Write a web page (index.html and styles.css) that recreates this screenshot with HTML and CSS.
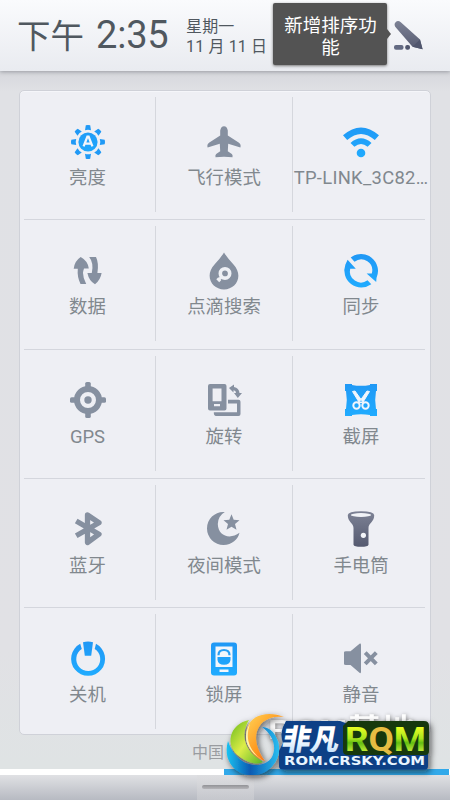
FILE: index.html
```html
<!DOCTYPE html>
<html lang="zh-CN">
<head>
<meta charset="utf-8">
<title>控制中心</title>
<link rel="stylesheet" href="styles.css">
</head>
<body>
<svg class="defs" width="0" height="0" aria-hidden="true">
  <defs>
    <linearGradient id="blue" x1="0" y1="-17" x2="0" y2="17" gradientUnits="userSpaceOnUse"><stop offset="0" stop-color="#2098f5"/><stop offset="1" stop-color="#20acff"/></linearGradient>
    <linearGradient id="slate" x1="0" y1="0" x2="0" y2="1"><stop offset="0" stop-color="#7d8295"/><stop offset="1" stop-color="#555a70"/></linearGradient>
  </defs>
</svg>
<div class="screen">
  <header class="topbar">
    <div class="time"><span class="ampm">下午</span><span class="clock">2:35</span></div>
    <div class="date"><span>星期一</span><span>11 月 11 日</span></div>
    <div class="tip">新增排序功能</div>
    <svg class="edit" viewBox="0 0 30 30">
      <path d="M1.2 5.8Q-.2 2.8 1.6 1.2 4-1 6.8 1.3L26 18.5 28.6 28.3 18.5 25.8Z" fill="url(#slate)"/>
      <path d="M18.5 25.8 26 18.5 28.6 28.3Z" fill="#50566d"/>
      <rect x="0" y="24" width="9.5" height="4.8" rx="2" fill="#636a82"/><rect x="11.2" y="24" width="4.8" height="4.8" rx="2" fill="#50566d"/>
    </svg>
  </header>

  <main class="panel">
    <div class="cell"><svg class="icon on" viewBox="-18 -18 36 36">
      <circle r="9.6"/>
      <path id="ray" d="M-3-11.8-2.2-16.7Q0-17.3 2.2-16.7L3-11.8Q0-12.8-3-11.8Z"/><use href="#ray" transform="rotate(45)"/><use href="#ray" transform="rotate(90)"/><use href="#ray" transform="rotate(135)"/><use href="#ray" transform="rotate(180)"/><use href="#ray" transform="rotate(225)"/><use href="#ray" transform="rotate(270)"/><use href="#ray" transform="rotate(315)"/>
      <path d="M-4.4 4.4-.6-5.3H.6L4.4 4.4M-2.6 1.6H2.6" fill="none" stroke="#f2f5fb" stroke-width="2.3"/></svg><span>亮度</span></div>
    <div class="cell"><svg class="icon" viewBox="-18 -18 36 36">
      <path d="M-3.8-11.5Q-3-15.8 0-15.8T3.8-11.5V-6.5L15 .8Q17.3 2.4 16.4 5.6L4.2 1.8 3.8 9.2 7.8 12Q9 13 8.5 15.3L0 14.8-8.5 15.3Q-9 13-7.8 12L-3.8 9.2-4.2 1.8-16.4 5.6Q-17.3 2.4-15 .8L-3.8-6.5Z"/></svg><span>飞行模式</span></div>
    <div class="cell"><svg class="icon on" viewBox="-18 -18 36 36">
      <path d="M-18-6.7Q0-22.5 18-6.7L13.8-2Q0-14-13.8-2Z"/><path d="M-10.5 1Q0-8.3 10.5 1L6.6 4.8Q0-.9-6.6 4.8Z"/><circle cy="11" r="4.3"/></svg><span class="wide">TP-LINK_3C82…</span></div>

    <div class="cell"><svg class="icon" viewBox="-18 -18 36 36">
      <path d="M-7.3-14Q-13.5-10-14.3-2.2H-10.2Q-11 6-7.5 13H-1.8Q-5 7-5 2Q-4.7-.5-4-2.4L.8-2.4Q0-10-7.3-14Z"/><path d="M1.2-14H8Q11-8 9.4 2H13.6Q12.5 9 7 13.2Q1 10-.6 2H3.8Q6-8 1.2-14Z"/></svg><span>数据</span></div>
    <div class="cell"><svg class="icon" viewBox="-18 -18 36 36">
      <path d="M0-18.5Q3-13.5 9.5-6.5C20 5 12 18.5 0 18.5S-20 5-9.5-6.5Q-3-13.5 0-18.5Z"/><g fill="none" stroke="#eef0f5"><circle cx="1" cy="2.4" r="4.7" stroke-width="3.6"/><path d="M-2.7 6.2-6 9.5M-6.7 7.3-3.8 10.3" stroke-width="2.8"/></g></svg><span>点滴搜索</span></div>
    <div class="cell"><svg class="icon on" viewBox="-18 -18 36 36">
      <path d="M-10.3-13.5A17 17 0 0 1 15.5 7L15.2 11 5.6 2.4H10.8A11 11 0 0 0-6.5-9.3Z"/><path d="M10.3 13.2A17 17 0 0 1-15.6-6.5L-13.4-11.2-5.2-2.2H-10.8A11 11 0 0 0 6.5 9.2Z"/></svg><span>同步</span></div>

    <div class="cell"><svg class="icon" viewBox="-18 -18 36 36">
      <circle r="11" fill="none" stroke="#8690a0" stroke-width="6"/><circle r="3.7"/><rect x="-2.8" y="-18" width="5.6" height="6" rx="1.6"/><rect x="-2.8" y="12" width="5.6" height="6" rx="1.6"/><rect x="-18" y="-2.8" width="6" height="5.6" rx="1.6"/><rect x="12" y="-2.8" width="6" height="5.6" rx="1.6"/></svg><span>GPS</span></div>
    <div class="cell"><svg class="icon" viewBox="-18 -18 36 36">
      <path fill-rule="evenodd" d="M-14-16H.5Q2.5-16 2.5-14V8.5Q2.5 10.5 .5 10.5H-14Q-16 10.5-16 8.5V-14Q-16-16-14-16ZM-11.4-11.5V1.3H-2.5V-11.5ZM-10 4V6.2H-4V4Z"/><path d="M4-.2H14.5Q16.5-.2 16.5 1.8V14Q16.5 16 14.5 16H-8Q-10.2 16-10.2 12.2H13V3.5H4Z"/><path d="M5-12 10-15.5V-13Q15-11.8 15.5-7H18L13.8-2 10-7H12Q12-9.5 9.5-9.7V-7.5Z"/></svg><span>旋转</span></div>
    <div class="cell"><svg class="icon on" viewBox="-18 -18 36 36">
      <path d="M-16-16H-9V-15Q0-13.3 9-15V-16H16V-9H15Q13.4 0 15 9H16V16H9V15Q0 13.3-9 15V16H-16V9H-15Q-13.4 0-15-9H-16Z"/><g fill="none" stroke="#f2f6fc"><circle cx="-4.5" cy="5.5" r="3.2" stroke-width="2"/><circle cx="4.5" cy="5.5" r="3.2" stroke-width="2"/></g><path d="M-8.5-8.5-1.5 3 1.5 1.5-6-9ZM8.5-8.5 1.5 3-1.5 1.5 6-9Z" fill="#f2f6fc" stroke="#f2f6fc" stroke-width="1"/></svg><span>截屏</span></div>

    <div class="cell"><svg class="icon" viewBox="-18 -18 36 36">
      <path d="M-11.8-8 11 5.2-.5 13.5V-14L11-6.2-11.8 6.8" fill="none" stroke="#8690a0" stroke-width="5.3" stroke-linejoin="round"/></svg><span>蓝牙</span></div>
    <div class="cell"><svg class="icon" viewBox="-18 -18 36 36">
      <path d="M.8-17Q-6-13-6.2-5C-6 7 6 11 15.5 3.8C14 10.5 8 16-.5 16A16.5 16.5 0 0 1-17-.5C-17-11-8-18 .8-17Z"/><path d="M7.5-14.7 9.7-9.3 15.5-8.8 11-5 12.5 .8 7.5-2.3 2.5 .8 4-5-.5-8.8 5.3-9.3Z"/></svg><span>夜间模式</span></div>
    <div class="cell"><svg class="icon" viewBox="-18 -18 36 36">
      <path d="M-13.2-14Q-13-17.8 0-17.8T13.2-14C13.5-7 7.5-6 7.5-1V15.8Q7 17.8 0 17.8T-7.5 15.8V-1C-7.5-6-13.5-7-13.2-14Z" fill="url(#slate)"/><ellipse cy="-14" rx="10.2" ry="1.9" fill="#f1f3f7"/><circle cx="2.4" cy="6.3" r="2.6" fill="#f3f5f9"/></svg><span>手电筒</span></div>

    <div class="cell"><svg class="icon on" viewBox="-18 -18 36 36">
      <path d="M-7.8-15.2A17 17 0 1 0 8-15.2L6.7-10A12 12 0 1 1-6.2-10Z"/><path d="M-5-16.8Q0-18.2 5-16.8L3.2-3.2H-3.2Z"/></svg><span>关机</span></div>
    <div class="cell"><svg class="icon on" viewBox="-18 -18 36 36">
      <rect x="-13" y="-16.5" width="26" height="33" rx="3"/><path d="M-8.5-12.5H8.5V8H-8.5ZM-4.5 10.5H4.5V13H-4.5Z" fill="#f2f6fb"/><path d="M-6.5-2H6.5V1Q6 5.8 0 5.8T-6.5 1Z"/><path d="M-5.5-3.8Q-5.5-9 0-9T5.5-3.8" fill="none" stroke="#289ff5" stroke-width="2.2"/></svg><span>锁屏</span></div>
    <div class="cell"><svg class="icon" viewBox="-18 -18 36 36">
      <path d="M-17-6.8Q-17-7.8-15-7.8H-10.5L-1.5-15.3Q0-16 0-14V12.5Q0 15 -1.5 13.8L-10.5 6H-15Q-17 6-17 5Z"/><path d="M4.2-6.3 15.3 4.8M15.3-6.3 4.2 4.8" fill="none" stroke="#8690a0" stroke-width="4"/></svg><span>静音</span></div>
  </main>
  <div class="carrier">中国</div>
  <div class="progress"><i></i></div>
  <footer class="handle"><i></i></footer>

  <svg class="brand" viewBox="220 700 230 90" width="230" height="90">
    <defs>
      <linearGradient id="lime" x1="0" y1="724" x2="0" y2="753" gradientUnits="userSpaceOnUse"><stop offset=".1" stop-color="#eaff24"/><stop offset=".5" stop-color="#a8e51c"/><stop offset=".65" stop-color="#62bd12"/><stop offset="1" stop-color="#d2f33c"/></linearGradient>
      <linearGradient id="orange" x1="0" y1="0" x2="1" y2="1"><stop stop-color="#ffd458"/><stop offset=".5" stop-color="#ff9a20"/><stop offset="1" stop-color="#ef4b12"/></linearGradient>
      <linearGradient id="leaf" x1="0" y1="0" x2="1" y2="1"><stop stop-color="#69b91b"/><stop offset=".5" stop-color="#dced48"/><stop offset="1" stop-color="#58b427"/></linearGradient>
      <linearGradient id="aqua" x1="0" y1="0" x2="1" y2="0"><stop stop-color="#19c3f2"/><stop offset=".45" stop-color="#0a5ab2"/><stop offset="1" stop-color="#28bdf0"/></linearGradient>
      <linearGradient id="ice" x1="0" y1="0" x2="0" y2="1"><stop offset=".4" stop-color="#fff"/><stop offset="1" stop-color="#b9dcfa"/></linearGradient>
      <filter id="shade" x="-10%" y="-20%" width="125%" height="150%"><feDropShadow dx="2" dy="2.5" stdDeviation="3" flood-color="#111" flood-opacity=".65"/></filter>
    </defs>
    <text x="268" y="739" class="ghost" textLength="147" lengthAdjust="spacingAndGlyphs">ROM基地</text>
    <g filter="url(#shade)">
      <path d="M228 741C222 762 237 776 254 775C273 774 284 754 277 739C274 731 268 727 262 727C273 735 277 747 272 757C264 770 237 769 228 741Z" fill="url(#aqua)"/>
      <path d="M249 720C229 724 224 746 240 757C248 763 257 765 263 762C244 751 240 735 249 720Z" fill="url(#leaf)"/>
      <path d="M284 717C269 711 251 714 247 729C244 745 253 758 265 761C254 746 253 731 263 722C269 717 276 716 284 717Z" fill="url(#orange)"/>
      <path d="M250 724C244 740 251 753 264 761C248 752 241 738 250 724Z" fill="#fff3ad"/>
      <path d="M286 721H340L348 724H428V766Q428 769.5 425 769.5H283Q279 769.5 279 766V751L283 743Q280 735 283 727Z" fill="#083f86"/>
      <path d="M348 721H424Q429 721 429 726V751Q429 755 425 755H348Q343 755 343 751V726Z" fill="#173909"/>
    </g>
    <text x="282" y="750" class="name" transform="translate(131 0) skewX(-10)" textLength="57" lengthAdjust="spacingAndGlyphs">非凡</text>
    <text x="345" y="750.5" class="rom" textLength="81" lengthAdjust="spacingAndGlyphs">R<tspan class="ring">Q</tspan>M</text>
    <text x="284" y="765.2" class="url" textLength="141" lengthAdjust="spacingAndGlyphs">ROM.CRSKY.COM</text>
  </svg>
</div>
</body>
</html>
```

FILE: styles.css
```css
* { box-sizing: border-box; }
body { margin: 0; font-family: Roboto, "Noto Sans CJK SC", sans-serif; }
.defs { position: absolute; }
.screen {
  position: relative;
  width: 450px;
  height: 800px;
  overflow: hidden;
  display: flex;
  flex-direction: column;
  background: linear-gradient(#d6d7dc 70px, #e0e1e5 92px, #e1e1e5 650px, #dfe3e4 765px);
}
.topbar {
  position: relative;
  display: flex;
  flex: none;
  height: 71px;
  padding-left: 17px;
  color: #50585f;
  background: linear-gradient(#fafbfd, #e9ebf0);
  box-shadow: 0 1px 4px #999ba2;
}
.time {
  display: flex;
  align-items: baseline;
  gap: 12px;
  width: 169px;
  line-height: 71px;
  white-space: nowrap;
}
.ampm { font-size: 33.5px; }
.clock { font-size: 38px; letter-spacing: -.2px; }
.date {
  display: flex;
  flex-direction: column;
  width: 87px;
  padding-top: 17px;
  font-size: 16px;
  line-height: 20px;
  white-space: nowrap;
  letter-spacing: .15px;
}
.tip {
  position: relative;
  width: 114px;
  height: 62px;
  margin-top: 3px;
  padding: 12px 9px 0 10px;
  border-radius: 2px;
  color: #fff;
  background: #535353;
  box-shadow: 0 1px 3px #777;
  font-size: 18.5px;
  line-height: 22px;
  text-align: center;
}
.tip::after {
  content: "";
  position: absolute;
  top: 26px;
  right: -4px;
  border: solid transparent;
  border-width: 5px 0 5px 4px;
  border-left-color: #535353;
}
.edit { width: 30px; height: 30px; margin: 21px 0 0 7px; }
.panel {
  display: grid;
  flex: none;
  grid-template-columns: 136px 137px 137px;
  grid-template-rows: repeat(4, 129.25px) 1fr;
  width: 412px;
  height: 645px;
  margin: 19px 0 0 19px;
  border: 1px solid #cfd1d8;
  border-radius: 5px;
  background: #eeeff4;
  box-shadow: inset 0 1px #f5f6fa;
}
.cell {
  display: flex;
  min-width: 0;
  flex-direction: column;
  align-items: center;
  padding: 32.5px 1px 0 0;
  color: #81888e;
  font-size: 18.4px;
  line-height: 24px;
  background:
    linear-gradient(#d5d7dd, #d5d7dd) right 6px / 1px 115px no-repeat,
    linear-gradient(#d4d6dd, #d4d6dd) left bottom / 100% 1px no-repeat;
}
.cell:nth-child(3n) {
  background: linear-gradient(#d4d6dd, #d4d6dd) left bottom / 132px 1px no-repeat;
}
.cell:nth-child(3n + 1) {
  background:
    linear-gradient(#d5d7dd, #d5d7dd) right 6px / 1px 115px no-repeat,
    linear-gradient(#d4d6dd, #d4d6dd) right bottom / 132px 1px no-repeat;
}
.cell:nth-child(n + 13) { background: linear-gradient(#d5d7dd, #d5d7dd) right 6px / 1px 115px no-repeat; }
.cell:nth-child(15) { background: none; }
.cell span { margin-top: 6.5px; white-space: nowrap; }
.cell .wide { letter-spacing: .3px; }
.icon { flex: none; width: 36px; height: 36px; overflow: visible; fill: #8690a0; }
.icon.on { fill: url(#blue); }
.carrier {
  flex: none;
  height: 34px;
  padding-left: 192px;
  color: #999ca0;
  font-size: 16px;
  line-height: 36px;
}
.progress { flex: none; height: 6px; padding-left: 224px; background: #fff; }
.progress i { display: block; width: 225px; height: 6px; background: #32a9ea; }
.handle {
  flex: none;
  height: 25px;
  padding: 10px 0 0 202px;
  background: linear-gradient(90deg, transparent 197px, #dadadc66 197px, #dadadc66 254px, transparent 254px), linear-gradient(#e0e1e4, #b7bac2);
}
.handle i { display: block; width: 47px; height: 4px; border-radius: 2px; background: linear-gradient(#929397, #b5b5b9); }
.brand { position: absolute; left: 220px; top: 700px; font-family: "Liberation Sans", "Noto Sans CJK SC", sans-serif; font-weight: 700; }
.ghost { fill: #fff; font-size: 28px; filter: drop-shadow(1px 1px 2px #888); }
.name { fill: url(#ice); font-size: 29px; font-weight: 900; }
.rom { fill: url(#lime); font-family: Roboto, sans-serif; font-size: 34px; font-weight: 700; }
.ring { fill: #e6bd42; }
.url { fill: #e9f5ff; font-family: "DejaVu Sans", sans-serif; font-size: 12px; }
```
